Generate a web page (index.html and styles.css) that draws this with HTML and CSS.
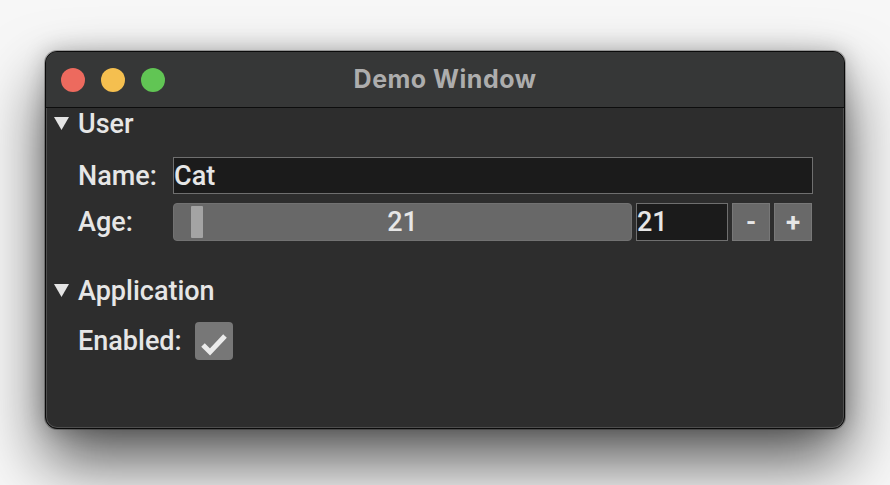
FILE: index.html
```html
<!DOCTYPE html>
<html>
<head>
<meta charset="utf-8">
<link rel="stylesheet" href="styles.css">
</head>
<body>
<div class="window">
  <div class="titlebar">
    <div class="lights">
      <span class="light red"></span>
      <span class="light yellow"></span>
      <span class="light green"></span>
    </div>
    <div class="title">Demo Window</div>
  </div>
  <div class="content">
    <div class="header">
      <svg class="tri" width="15" height="13" viewBox="0 0 15 13"><polygon points="0,0 15,0 7.5,13" fill="#e4e4e4"/></svg>
      <span>User</span>
    </div>
    <div class="row first">
      <span class="label">Name:</span>
      <div class="textbox wide">Cat</div>
    </div>
    <div class="row">
      <span class="label">Age:</span>
      <div class="slider">
        <span class="grab"></span>
        <span class="value">21</span>
      </div>
      <div class="textbox num">21</div>
      <div class="btn">-</div>
      <div class="btn">+</div>
    </div>
    <div class="header second">
      <svg class="tri" width="15" height="13" viewBox="0 0 15 13"><polygon points="0,0 15,0 7.5,13" fill="#e4e4e4"/></svg>
      <span>Application</span>
    </div>
    <div class="row check-row">
      <span class="label-inline">Enabled:</span>
      <div class="checkbox">
        <svg width="38" height="38" viewBox="0 0 38 38"><polyline points="8,23 15,30 30,14" fill="none" stroke="#ebebeb" stroke-width="5"/></svg>
      </div>
    </div>
  </div>
</div>
</body>
</html>
```

FILE: styles.css
```css
html, body {
  margin: 0;
  padding: 0;
}
body {
  width: 890px;
  height: 485px;
  background: #f7f7f7;
  overflow: hidden;
  font-family: Roboto, "Liberation Sans", sans-serif;
}
.window {
  box-sizing: border-box;
  margin: 51px 0 0 45px;
  width: 800px;
  height: 378px;
  border-radius: 12px;
  background: #2d2d2d;
  border: 1px solid #0a0a0a;
  box-shadow: inset 0 0 0 1px rgba(255,255,255,0.16), 0 0 0 1px rgba(0,0,0,0.25), 0 32px 64px rgba(0,0,0,0.66), 0 0 22px rgba(0,0,0,0.22);
  overflow: hidden;
  display: flex;
  flex-direction: column;
}
.titlebar {
  height: 55px;
  flex: none;
  background: #363737;
  border-bottom: 1px solid #0d0d0d;
  display: flex;
  align-items: center;
  position: relative;
}
.lights {
  display: flex;
  gap: 16px;
  padding-left: 15px;
}
.light {
  width: 24px;
  height: 24px;
  border-radius: 50%;
  display: block;
}
.red { background: #ed6a5e; }
.yellow { background: #f5bf4f; }
.green { background: #61c554; }
.title {
  position: absolute;
  left: 0;
  right: 0;
  top: 0;
  bottom: 0;
  display: flex;
  align-items: center;
  justify-content: center;
  font-family: Inter, "Liberation Sans", sans-serif;
  font-weight: 700;
  font-size: 25px;
  letter-spacing: 0.5px;
  color: #adadad;
  padding-bottom: 2px;
}
.content {
  padding: 0 0 0 8px;
  color: #e6e6e6;
  font-size: 27px;
  font-weight: 500;
  display: flex;
  flex-direction: column;
}
.header {
  height: 32px;
  display: flex;
  align-items: center;
  gap: 9px;
}
.header.second {
  margin-top: 34px;
}
.tri {
  display: block;
  flex: none;
  margin-top: -1px;
}
.row {
  display: flex;
  align-items: center;
  height: 38px;
  margin-top: 9px;
  padding-left: 24px;
}
.row.first {
  margin-top: 17px;
  height: 37px;
}
.label {
  width: 95px;
  flex: none;
}
.textbox {
  box-sizing: border-box;
  height: 100%;
  background: #1b1b1b;
  border: 1px solid #6f6f6f;
  display: flex;
  align-items: center;
  padding-left: 0;
}
.textbox.wide {
  width: 640px;
}
.slider {
  box-sizing: border-box;
  position: relative;
  width: 459px;
  height: 38px;
  background: #686868;
  border: 1px solid #727272;
  border-radius: 4px;
  display: flex;
  align-items: center;
  justify-content: center;
}
.grab {
  position: absolute;
  left: 17px;
  top: 2px;
  bottom: 2px;
  width: 12px;
  background: #a4a4a4;
  border-radius: 1px;
}
.value {
  position: relative;
}
.textbox.num {
  width: 92px;
  margin-left: 4px;
}
.btn {
  box-sizing: border-box;
  width: 38px;
  height: 38px;
  margin-left: 4px;
  background: #696969;
  border: 1px solid #787878;
  display: flex;
  align-items: center;
  justify-content: center;
  font-weight: 700;
  font-size: 26px;
}
.check-row {
  margin-top: 15px;
}
.label-inline {
  margin-right: 13px;
}
.checkbox {
  width: 38px;
  height: 38px;
  background: #777777;
  border-radius: 4px;
}
.checkbox svg {
  display: block;
}
```
